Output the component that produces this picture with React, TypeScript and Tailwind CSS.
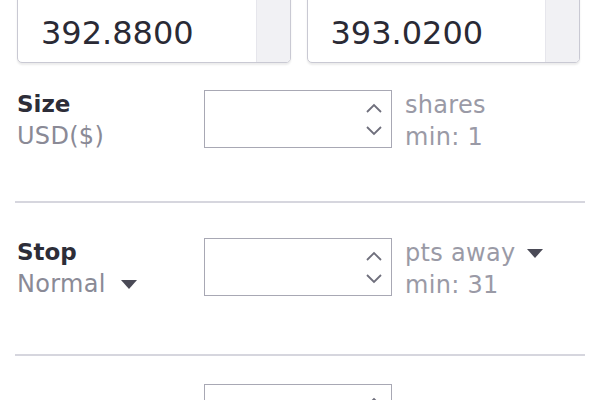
import React from 'react';

const Caret: React.FC = () => (
    <svg width="18" height="11" viewBox="0 0 18 11" className="inline-block">
        <polygon points="1,1 17,1 9,10" fill="#4a4a56" />
    </svg>
);

const Spinner: React.FC = () => (
    <div className="flex flex-col items-center gap-[13px] pr-[8px] pt-[12px]">
        <svg width="18" height="10" viewBox="0 0 18 10">
            <polyline points="2,9 9,2 16,9" fill="none" stroke="#6f6f7c" strokeWidth="1.8" />
        </svg>
        <svg width="18" height="10" viewBox="0 0 18 10">
            <polyline points="2,1 9,8 16,1" fill="none" stroke="#6f6f7c" strokeWidth="1.8" />
        </svg>
    </div>
);

// top of the card is scrolled out of view, only the price shows
const PriceCard: React.FC<{ value: string }> = ({ value }) => (
    <div className="flex flex-1 h-[106px] rounded-[5px] border-[1.5px] border-[#c9c9d3] bg-white shadow-[0_2px_2px_rgba(0,0,0,0.08)] overflow-hidden">
        <div className="flex flex-1 flex-col justify-end pl-[23px] pb-[9px]">
            <span className="text-[32px] leading-[40px] text-[#2a2a35]">{value}</span>
        </div>
        <div className="w-[34px] bg-[#f1f1f4] border-l border-[#e6e6ec]" />
    </div>
);

const NumberBox: React.FC = () => (
    <div className="mt-[2px] flex justify-end w-[188px] h-[58px] border-[1.5px] border-[#a8a8b4] bg-white">
        <Spinner />
    </div>
);

const Row: React.FC<{
    title: string;
    sub: React.ReactNode;
    unit: React.ReactNode;
    min: string;
}> = ({ title, sub, unit, min }) => (
    <div className="flex items-start">
        <div className="w-[187px] flex flex-col text-[24px] leading-[32px] tracking-[0.3px]">
            <span className="font-semibold text-[#2d2d38] tracking-normal text-[23px]">{title}</span>
            <span className="text-[#8a8a96]">{sub}</span>
        </div>
        <NumberBox />
        <div className="ml-[13px] mt-[1px] flex flex-col text-[24px] leading-[32px] tracking-[0.3px] text-[#9a9aa6]">
            <span>{unit}</span>
            <span>{min}</span>
        </div>
    </div>
);

const App: React.FC = () => {
    return (
        <div className="w-[600px] h-[400px] overflow-hidden bg-white font-['DejaVu_Sans',sans-serif]">
            <div className="flex gap-[16px] pl-[17px] pr-[20px] -mt-[43px]">
                <PriceCard value="392.8800" />
                <PriceCard value="393.0200" />
            </div>

            <div className="pl-[17px] pt-[25px] pb-[48px]">
                <Row title="Size" sub="USD($)" unit="shares" min="min: 1" />
            </div>

            <div className="mx-[15px] h-[2px] bg-[#d6d6de]" />

            <div className="pl-[17px] pt-[33px] pb-[53px]">
                <Row
                    title="Stop"
                    sub={<span className="flex items-center gap-[14px]">Normal <Caret /></span>}
                    unit={<span className="flex items-center gap-[11px]">pts away <Caret /></span>}
                    min="min: 31"
                />
            </div>

            <div className="mx-[15px] h-[2px] bg-[#d6d6de]" />

            {/* next row: only the top of its input is in view */}
            <div className="pl-[17px] pt-[26px] flex">
                <div className="w-[187px]" />
                <NumberBox />
            </div>
        </div>
    );
};

export default App;
